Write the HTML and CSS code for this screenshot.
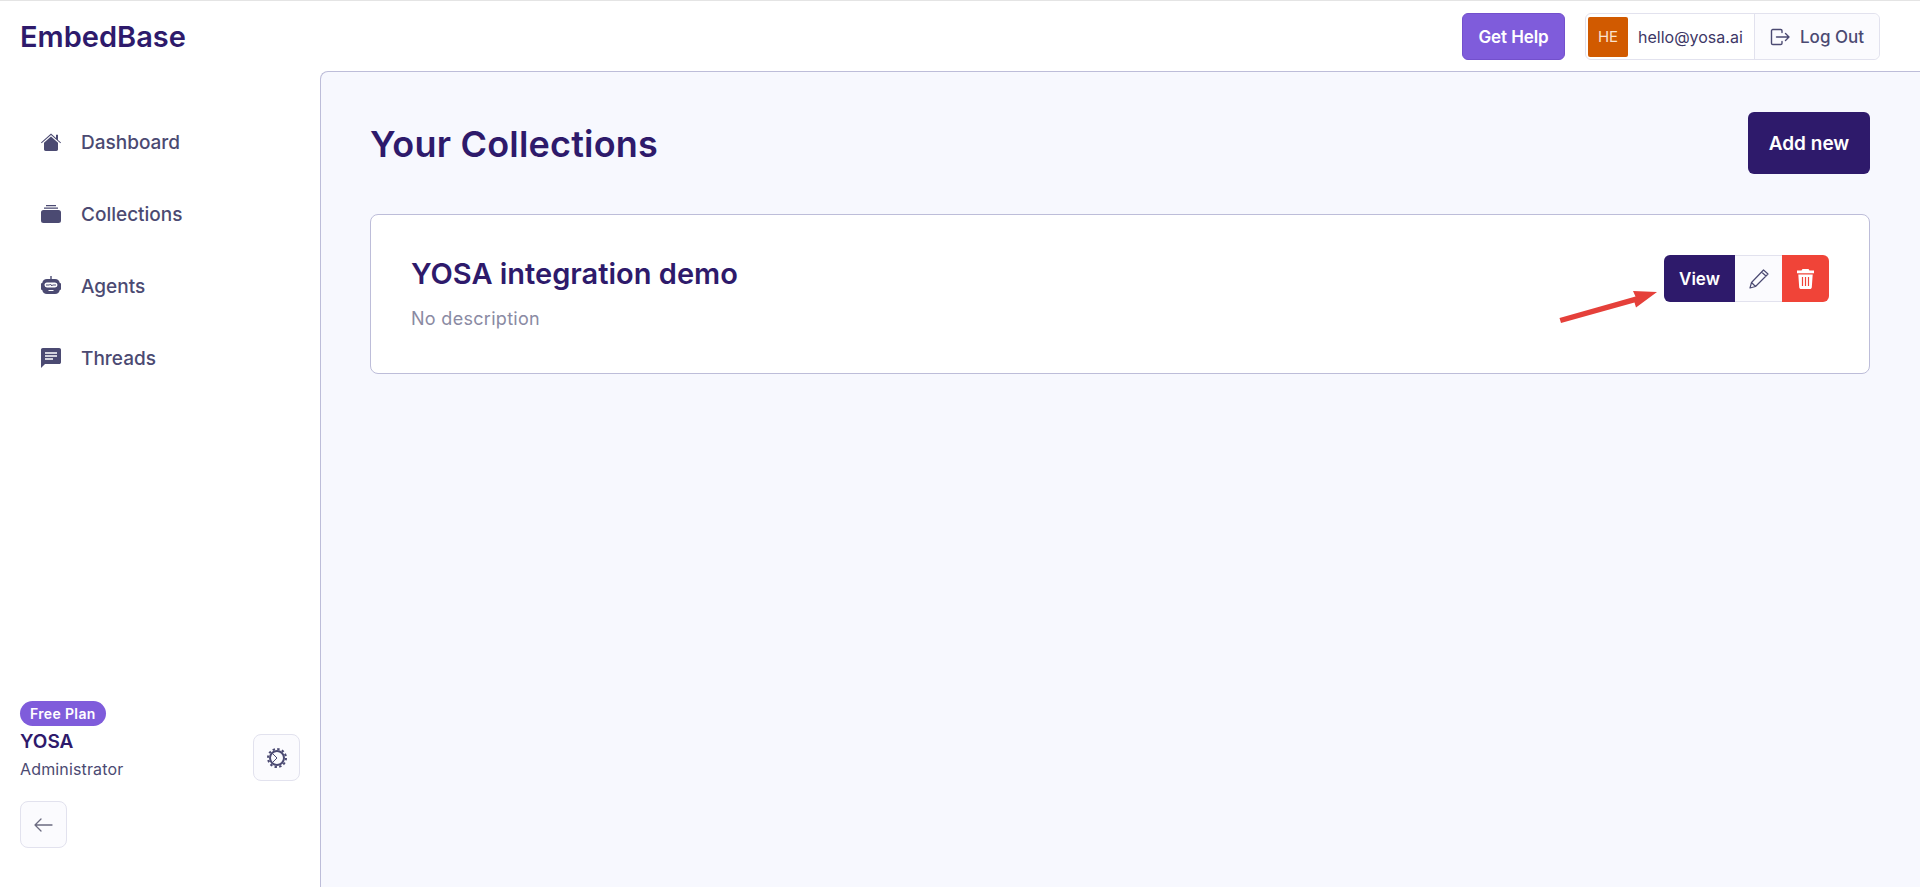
FILE: index.html
```html
<!DOCTYPE html>
<html lang="en">
<head>
    <meta charset="UTF-8">
    <title>EmbedBase | Collections</title>
    <link rel="stylesheet" href="styles.css">
</head>
<body>
    <header class="topbar">
        <div class="logo">EmbedBase</div>
        <div class="topbar-actions">
            <button class="help-btn">Get Help</button>
            <div class="user-box">
                <span class="avatar">HE</span>
                <span class="user-email">hello@yosa.ai</span>
                <button class="logout-btn">
                    <svg width="20" height="20" viewBox="0 0 20 20" fill="none" stroke="#4b4a72" stroke-width="1.400" stroke-linecap="round" stroke-linejoin="round"><path d="M12 5.500V3.800a1.300 1.300 0 0 0-1.300-1.300H2.800a1.300 1.300 0 0 0-1.300 1.300v12.400a1.300 1.300 0 0 0 1.300 1.300h7.900a1.300 1.300 0 0 0 1.300-1.300v-1.700"/><path d="M6.500 10h12.500M15.500 6.500 19 10l-3.500 3.500"/></svg>
                    Log Out
                </button>
            </div>
        </div>
    </header>

    <div class="layout">
        <aside class="sidebar">
            <nav class="nav">
                <a class="nav-item">
                    <svg class="nav-icon" viewBox="0 0 20 20"><path d="M10 1.500 15 6V2.800h2v5.100L20 10.500l-.6.700L10 2.900.6 11.200l-.6-.7z"/><path d="M10 4.500l7 6.200v6.600c0 .9-.7 1.700-1.600 1.700H4.600c-.9 0-1.600-.8-1.600-1.700v-6.600z"/></svg>
                    Dashboard
                </a>
                <a class="nav-item">
                    <svg class="nav-icon" viewBox="0 0 20 20"><path d="M5 1h10v1.200H5zM3 3.500h14v1.200H3zM2.500 6h15A2.500 2.500 0 0 1 20 8.500v8a2.500 2.500 0 0 1-2.500 2.500h-15A2.500 2.500 0 0 1 0 16.500v-8A2.500 2.500 0 0 1 2.500 6z"/></svg>
                    Collections
                </a>
                <a class="nav-item">
                    <svg class="nav-icon" viewBox="0 0 20 20"><path d="M9.300 0h1.400v3H14a5 5 0 0 1 4.800 4H19a1 1 0 0 1 1 1v5a1 1 0 0 1-1 1h-.2a5 5 0 0 1-4.800 4H6a5 5 0 0 1-4.800-4H1a1 1 0 0 1-1-1V8a1 1 0 0 1 1-1h.2A5 5 0 0 1 6 3h3.300z"/><path d="M6 6.500h8a2.500 2.500 0 0 1 0 5H6a2.500 2.500 0 0 1 0-5z" fill="#fff"/><path d="M5 9h3.500l1-1 1.200 2 .8-1H15" fill="none" stroke="#4b4a72"/><path d="M7.500 14.500h5" stroke="#fff"/></svg>
                    Agents
                </a>
                <a class="nav-item">
                    <svg class="nav-icon" viewBox="0 0 20 20"><path d="M1.800 0h16.400C19.200 0 20 .8 20 1.800v12.400c0 1-.8 1.800-1.800 1.800H4l-4 4V1.800C0 .8.800 0 1.800 0z"/><path d="M4 5h12M4 8h12M4 11h8" stroke="#fff" stroke-width="1.300"/></svg>
                    Threads
                </a>
            </nav>

            <div class="account">
                <div class="account-row">
                    <div>
                        <span class="plan-badge">Free Plan</span>
                        <div class="account-name">YOSA</div>
                        <div class="account-role">Administrator</div>
                    </div>
                    <button class="icon-btn">
                        <svg width="20" height="20" viewBox="0 0 20 20" fill="none" stroke="#4b4a72"><circle cx="10" cy="10" r="7" stroke-width="2"/><circle cx="10" cy="10" r="9" stroke-width="2" stroke-dasharray="2.400 2.312"/><path d="M5.500 5.500 10 10l-4.500 4.500" stroke-width="1"/></svg>
                    </button>
                </div>
                <button class="icon-btn">
                    <svg width="20" height="14" viewBox="0 0 20 14" fill="none" stroke="#6b6b80" stroke-width="1.300" stroke-linecap="round" stroke-linejoin="round"><path d="M1 7h17M7 1 1 7l6 6"/></svg>
                </button>
            </div>
        </aside>

        <main class="content">
            <div class="content-head">
                <h1>Your Collections</h1>
                <button class="add-btn">Add new</button>
            </div>

            <section class="card">
                <div>
                    <h2>YOSA integration demo</h2>
                    <p class="card-desc">No description</p>
                </div>
                <div class="btn-group">
                    <button class="view-btn">View</button>
                    <button class="edit-btn">
                        <svg width="20" height="20" viewBox="0 0 20 20" fill="none" stroke="#4b4a72" stroke-width="1.200" stroke-linejoin="round"><path d="M14.500 1 19 5 6.500 17.500 1 19l1.500-5.500zM12.500 3l4.500 4M2.500 13.500l4 4"/></svg>
                    </button>
                    <button class="delete-btn">
                        <svg width="17" height="20" viewBox="0 0 17 20" fill="#fff"><path d="M5.500 0h6l1 1.500H17v2.700H0V1.500h4.500zM1.300 5.500h14.400l-.9 12.700c-.1 1-.9 1.800-1.900 1.800H4.100c-1 0-1.800-.8-1.900-1.800z"/><path d="M5.500 8v9M8.500 8v9M11.500 8v9" stroke="#f04438" stroke-width="1.200"/></svg>
                    </button>
                </div>
            </section>

            <svg class="annotation" width="100" height="34" viewBox="0 0 100 34" fill="#e5403a"><path d="M.5 28 76.500 6.500 74 1 98 2 77 17.500 75.500 12.500 2 33z"/></svg>
        </main>
    </div>
</body>
</html>
```

FILE: styles.css
```css
:root {
    --navy: #2e1a6b;
    --purple: #7f5cdb;
    --slate: #4b4a72;
    --line: #bdbdd9;
    --line-soft: #e2e2ee;
    --bg-soft: #f7f8fe;
}

* {
    margin: 0;
    padding: 0;
    box-sizing: border-box;
    font-family: "Inter", "Liberation Sans", sans-serif;
}

html, body {
    height: 100%;
    overflow: hidden;
}

body {
    display: flex;
    flex-direction: column;
    background: #fff;
    border-top: 1px solid #e4e4e4;
    color: var(--slate);
}

button {
    cursor: pointer;
    border: none;
}

.topbar {
    height: 70px;
    flex-shrink: 0;
    display: flex;
    align-items: center;
    justify-content: space-between;
    padding: 1px 40px 0 20px;
}

.logo {
    font-size: 29px;
    font-weight: 600;
    color: var(--navy);
}

.topbar-actions {
    display: flex;
    align-items: center;
    gap: 20px;
}

.help-btn {
    width: 103px;
    height: 47px;
    border-radius: 6px;
    background: var(--purple);
    border: 1px solid #7350cc;
    color: #fff;
    font-size: 17px;
    font-weight: 600;
    letter-spacing: -0.1px;
}

.user-box {
    width: 295px;
    height: 47px;
    display: flex;
    align-items: center;
    border: 1px solid var(--line-soft);
    border-radius: 6px;
    padding-left: 2px;
    background: #fff;
}

.avatar {
    width: 40px;
    height: 40px;
    flex-shrink: 0;
    display: flex;
    align-items: center;
    justify-content: center;
    border-radius: 2px;
    background: #d15a00;
    color: #fbe3cf;
    font-size: 15px;
}

.user-email {
    flex: 1;
    padding-left: 10px;
    font-size: 16px;
    color: #3d3766;
    white-space: nowrap;
}

.logout-btn {
    width: 125px;
    height: 100%;
    display: flex;
    align-items: center;
    gap: 10px;
    padding-left: 15px;
    background: #fbfbfe;
    border-left: 1px solid var(--line-soft);
    border-radius: 0 6px 6px 0;
    color: var(--slate);
    font-size: 17px;
    font-weight: 500;
}

.layout {
    flex: 1;
    display: flex;
    min-height: 0;
}

.sidebar {
    width: 320px;
    flex-shrink: 0;
    display: flex;
    flex-direction: column;
    justify-content: space-between;
    padding: 59px 20px 39px;
}

.nav {
    display: flex;
    flex-direction: column;
    gap: 48px;
}

.nav-item {
    height: 24px;
    display: flex;
    align-items: center;
    gap: 20px;
    padding-left: 21px;
    font-size: 19px;
    font-weight: 500;
    color: var(--slate);
}

.nav-icon {
    width: 20px;
    height: 20px;
    fill: var(--slate);
}

.account {
    display: flex;
    flex-direction: column;
    gap: 20px;
}

.account-row {
    display: flex;
    align-items: flex-end;
    justify-content: space-between;
}

.plan-badge {
    display: inline-block;
    height: 25px;
    line-height: 25px;
    padding: 0 10px;
    border-radius: 13px;
    background: var(--purple);
    color: #fff;
    font-size: 14px;
    font-weight: 600;
    letter-spacing: 0.35px;
}

.account-name {
    margin-top: 4px;
    font-size: 19px;
    font-weight: 600;
    color: var(--navy);
    line-height: 24px;
}

.account-role {
    margin: 4px 0 1px;
    font-size: 16px;
    color: var(--slate);
    line-height: 22px;
    letter-spacing: 0.15px;
}

.icon-btn {
    width: 47px;
    height: 47px;
    display: flex;
    align-items: center;
    justify-content: center;
    background: #fbfbfe;
    border: 1px solid var(--line-soft);
    border-radius: 8px;
}

.content {
    flex: 1;
    position: relative;
    padding: 40px 50px 40px 49px;
    background: var(--bg-soft);
    border: 1px solid var(--line);
    border-right: none;
    border-bottom: none;
    border-top-left-radius: 8px;
}

.content-head {
    height: 62px;
    display: flex;
    align-items: center;
    justify-content: space-between;
    margin-bottom: 40px;
}

h1 {
    font-size: 36px;
    font-weight: 600;
    color: var(--navy);
    letter-spacing: 0.2px;
    padding-top: 1px;
}

.add-btn {
    width: 122px;
    height: 62px;
    border-radius: 6px;
    background: var(--navy);
    color: #fff;
    font-size: 19px;
    font-weight: 600;
}

.card {
    height: 160px;
    display: flex;
    justify-content: space-between;
    padding: 40px;
    background: #fff;
    border: 1px solid var(--line);
    border-radius: 8px;
}

h2 {
    font-size: 29px;
    line-height: 38px;
    font-weight: 600;
    color: var(--navy);
}

.card-desc {
    margin-top: 14px;
    font-size: 18px;
    line-height: 24px;
    color: #8a8aa3;
    letter-spacing: 0.3px;
}

.btn-group {
    display: flex;
    height: 47px;
}

.btn-group button {
    display: flex;
    align-items: center;
    justify-content: center;
}

.view-btn {
    width: 71px;
    background: var(--navy);
    color: #fff;
    font-size: 17px;
    font-weight: 600;
    border-radius: 6px 0 0 6px;
}

.edit-btn {
    width: 47px;
    background: #fbfbfe;
    border-top: 1px solid var(--line-soft);
    border-bottom: 1px solid var(--line-soft);
}

.delete-btn {
    width: 47px;
    background: #f04438;
    border-radius: 0 6px 6px 0;
}

.annotation {
    position: absolute;
    left: 1238px;
    top: 218px;
}
```
